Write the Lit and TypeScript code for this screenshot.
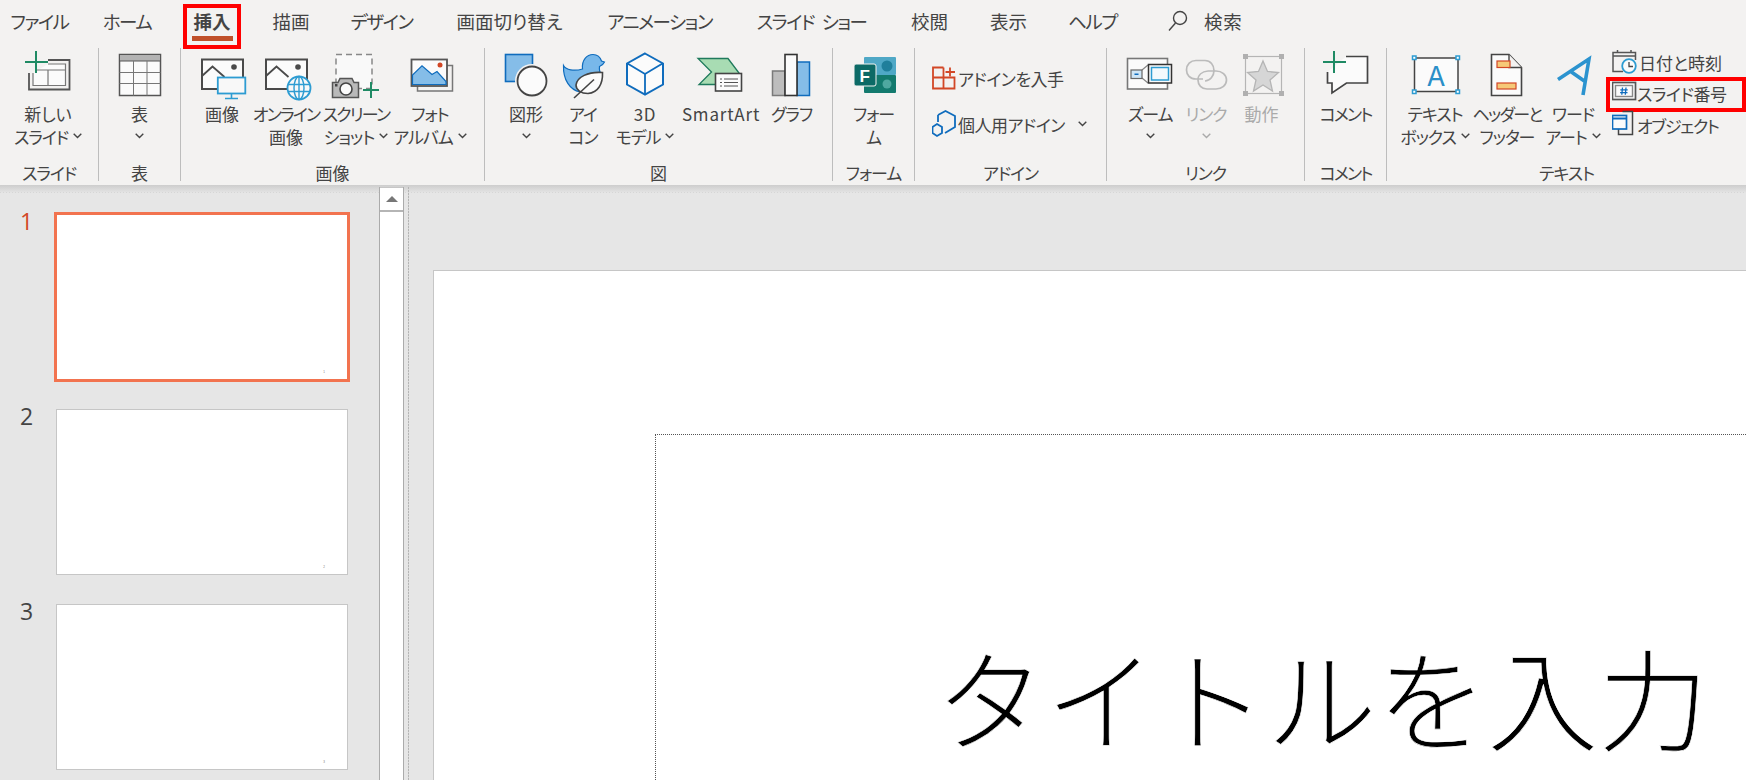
import { LitElement, html, css, svg } from "lit";
import { customElement } from "lit/decorators.js";

const BLUE = "#0f6cbd", SKY = "#2d9cd2", LIGHT = "#85bde8", DK = "#4a4a4a", GREEN = "#1f8a64", OR = "#d24726";
const plus = (x: number, y: number, a: number, b = a, w = 2) => svg`<path d="M${x - a} ${y}H${x + b}M${x} ${y - a}V${y + a}" stroke="${GREEN}" stroke-width="${w}" fill="none"/>`;
const picture = (dx: number) => svg`<g transform="translate(${dx} 0)"><rect x="202" y="59.5" width="41" height="29.5" fill="#fbfbfb" stroke="${DK}" stroke-width="2"/><path d="M202 76L212.5 66.500L224.500 77" fill="none" stroke="${DK}" stroke-width="1.800"/><circle cx="234" cy="67" r="2.800" fill="${DK}"/></g>`;

const ICONS: Record<string, unknown> = {
  slide: svg`<path d="M48 60H69.500V89.500H29V73" fill="none" stroke="#555" stroke-width="1.800"/><path d="M48 64H65.500V85.500H33V73" fill="#fbfbfb" stroke="#777" stroke-width="1.200"/><path d="M36 70H65.500M48 70V85.500" fill="none" stroke="#777" stroke-width="1.200"/>${plus(36, 62, 11, 12)}`,
  table: svg`<rect x="119.500" y="54.500" width="41" height="41" fill="#fbfbfb" stroke="#555" stroke-width="1.500"/><rect x="119.500" y="54.500" width="41" height="6.500" fill="#b3b3b3" stroke="#555" stroke-width="1"/><path d="M133.500 61V95.500M147 61V95.500M119.500 72.500H160.500M119.500 83.500H160.500" stroke="#777" stroke-width="1"/>`,
  image: svg`${picture(0)}<rect x="217.800" y="77.500" width="27.500" height="16" fill="#f8f8f8" stroke="${SKY}" stroke-width="1.800"/><path d="M231.500 94V98M225 98.500H238" stroke="${SKY}" stroke-width="1.600"/>`,
  online: svg`${picture(64)}<circle cx="299" cy="88" r="11.500" fill="#f8f8f8" stroke="${SKY}" stroke-width="1.800"/><ellipse cx="299" cy="88" rx="5" ry="11.500" fill="none" stroke="${SKY}" stroke-width="1.400"/><path d="M288 84.500H310M288 91.500H310M299 76.500V99.500" stroke="${SKY}" stroke-width="1.400"/>`,
  screen: svg`<rect x="336" y="54.500" width="36" height="34" fill="#f9f9f9" stroke="#888" stroke-width="1.500" stroke-dasharray="6 4"/><path d="M332.500 82.500H338L340 78.500H352L354 82.500H358.500V97.500H332.500Z" fill="#b9b9b9" stroke="#555" stroke-width="1.500"/><circle cx="346" cy="89" r="6" fill="#fbfbfb" stroke="#444" stroke-width="1.600"/><rect x="335" y="84" width="2.500" height="2.500" fill="#444"/>${plus(371, 90, 8)}`,
  album: svg`<path d="M417.500 86V91H452.500V65.500H447" fill="none" stroke="#777" stroke-width="1.500"/><rect x="411.500" y="59.500" width="35.500" height="26.500" fill="#fbfbfb" stroke="#555" stroke-width="1.800"/><path d="M412.500 84.500V75L422 65.800L432 74.500L437 71.500L446 81.500V84.500Z" fill="${LIGHT}" stroke="${BLUE}" stroke-width="1.200"/><circle cx="440" cy="65" r="2.500" fill="${OR}"/>`,
  shape: svg`<rect x="505.500" y="54.500" width="27" height="27" fill="${LIGHT}" stroke="${BLUE}" stroke-width="1.600"/><circle cx="532" cy="81" r="17" fill="#f3f2f1"/><circle cx="532" cy="81" r="14.500" fill="#fbfbfb" stroke="#444" stroke-width="1.800"/>`,
  icon: svg`<path d="M563.500 65.500C566 70 574 71.500 582.500 69C581.500 60 587 54.500 593 54.500C598 54.500 600.500 58 601.500 61L604.500 62C603 65 601 66 599.500 66.500C599 70 600 73 602 75L580 92C570 90 563 80 563.500 65.500Z" fill="#78b8ea" stroke="${BLUE}" stroke-width="1.200"/><path d="M602.500 72.500C603 84 598 92.500 588 93.500C581 93.500 576 90 576 85C577 77 588 71.500 602.500 72.500Z" fill="#fbfbfb" stroke="#444" stroke-width="1.600"/><path d="M574 98L594 79.500" stroke="#444" stroke-width="1.600" fill="none"/>`,
  cube: svg`<path d="M645 53.500L663 63.500V84.500L645 94.500L627 84.500V63.500Z" fill="#fbfbfb" stroke="${BLUE}" stroke-width="2"/><path d="M627.500 63.500L645 74L662.500 63.500M645 74V94" fill="none" stroke="${BLUE}" stroke-width="1.800"/>`,
  smart: svg`<path d="M698 58.500H728L739 73V84.500H699L711.500 72Z" fill="#a8dcb3" stroke="#1f7a5c" stroke-width="1.300"/><rect x="715.500" y="73.500" width="26" height="17.500" fill="#fbfbfb" stroke="#444" stroke-width="1.600"/><path d="M720 79H722M724 79H738M720 82.500H722M724 82.500H738M720 86H722M724 86H738" stroke="#555" stroke-width="1"/>`,
  chart: svg`<rect x="772.500" y="71" width="12.500" height="24.500" fill="#bdbdbd" stroke="#7a7a7a" stroke-width="1.500"/><rect x="797" y="62" width="12.500" height="33.500" fill="${LIGHT}" stroke="${BLUE}" stroke-width="1.500"/><rect x="785" y="54.500" width="12" height="41" fill="#fbfbfb" stroke="#333" stroke-width="1.600"/>`,
  form: svg`<rect x="863" y="57" width="32" height="18" rx="1" fill="#4fa8c6"/><rect x="863" y="75" width="32" height="18" rx="1" fill="#137a6e"/><circle cx="886" cy="66" r="5.500" fill="#1f7f9b"/><circle cx="886" cy="84" r="4.500" fill="#4fa8a0"/><rect x="853" y="64" width="22" height="22" rx="2" fill="#0c6a66" stroke="#f3f2f1"/><text x="858.500" y="81.500" font-family="Liberation Sans" font-weight="700" font-size="17" fill="#fff">F</text>`,
  addin: svg`<path d="M943.500 67.500H933V88.500H954.500V77.500H933M943.500 67.500V88.500" fill="none" stroke="${OR}" stroke-width="1.800"/><path d="M945.500 72H955M950 67.500V76.500" stroke="${OR}" stroke-width="1.800"/>`,
  hex: svg`<path d="M938 116L945.500 112L955 117V128L945 134M938 123V116" fill="none" stroke="${BLUE}" stroke-width="1.800"/><path d="M937 125L942 128V134L937 137L932.500 134V128Z" fill="none" stroke="${BLUE}" stroke-width="1.800"/>`,
  zoom: svg`<rect x="1127.500" y="58.500" width="40" height="30.500" fill="#fbfbfb" stroke="#777" stroke-width="1.600"/><path d="M1142 70L1148 65M1142 78L1148 83" stroke="#888" stroke-width="1.200"/><rect x="1131" y="70" width="11" height="8.500" fill="#cfe5f5" stroke="#666" stroke-width="1.200"/><rect x="1134.500" y="73.500" width="4" height="1.500" fill="${BLUE}"/><rect x="1148.500" y="64.500" width="23" height="18.500" fill="#fbfbfb" stroke="#333" stroke-width="1.500"/><rect x="1151.500" y="67.500" width="17" height="12.500" fill="#f4f9fc" stroke="${SKY}" stroke-width="1.500"/>`,
  link: svg`<path d="M1203 79H1196C1190 79 1186.500 75 1186.500 70C1186.500 64.500 1190.500 60.500 1196 60.500H1205C1210.500 60.500 1214 65 1214 70.500C1214 76 1210 81 1205 81" fill="none" stroke="#bbb" stroke-width="1.700"/><path d="M1208 71H1216C1222 71 1226.500 75 1226.500 80C1226.500 85 1222 89 1216 89H1207C1201.500 89 1198 85 1198 80C1198 75 1202 71.500 1208 71" fill="none" stroke="#bbb" stroke-width="1.700"/>`,
  action: svg`<rect x="1246.500" y="56.500" width="36" height="37" fill="none" stroke="#b5b5b5" stroke-width="1.200"/><g fill="#b0b0b0"><rect x="1244" y="54" width="5" height="5"/><rect x="1280" y="54" width="5" height="5"/><rect x="1244" y="91" width="5" height="5"/><rect x="1280" y="91" width="5" height="5"/></g><path d="M1264 61L1268.500 71.500L1279.500 72.500L1271 80L1273.500 91L1264 85L1254.500 91L1257 80L1248.500 72.500L1259.500 71.500Z" fill="#d6d6d6" stroke="#b5b5b5" stroke-width="1.300"/>`,
  comment: svg`<path d="M1345 56.500H1366.500V83H1345.500L1331 93V83H1326.500V72" fill="#fbfbfb" stroke="#444" stroke-width="1.700"/>${plus(1333, 62, 11, 12)}`,
  textbox: svg`<rect x="1414.500" y="58" width="43.500" height="33.500" fill="#fbfbfb" stroke="#444" stroke-width="1.500"/><g fill="#fff" stroke="${SKY}" stroke-width="1.500"><rect x="1412.500" y="56" width="3.500" height="3.500"/><rect x="1456" y="56" width="3.500" height="3.500"/><rect x="1412.500" y="90" width="3.500" height="3.500"/><rect x="1456" y="90" width="3.500" height="3.500"/></g><text x="1436" y="85.500" text-anchor="middle" font-family="Inter" font-weight="400" font-size="27" fill="#2a8fc8">A</text>`,
  header: svg`<path d="M1491.500 54.500H1509L1521.500 67.500V95.500H1491.500Z" fill="#fbfbfb" stroke="#444" stroke-width="1.600"/><path d="M1509 54.500V67.500H1521.500" fill="#f3f2f1" stroke="#444" stroke-width="1.400"/><rect x="1497" y="61" width="13" height="6.500" fill="#f6c978" stroke="${OR}" stroke-width="1.200"/><rect x="1497" y="83" width="19" height="6" fill="#f6c978" stroke="${OR}" stroke-width="1.200"/>`,
  wordart: svg`<path d="M1558 79.500L1589 59L1583 95M1570 71L1585 81.500" fill="none" stroke="#2b93cf" stroke-width="3.600" stroke-linejoin="miter"/>`,
  date: svg`<path d="M1623 73.500H1613V54.500H1635.500V62" fill="none" stroke="#555" stroke-width="1.500"/><path d="M1613 58H1635.500" stroke="#555" stroke-width="1.500"/><path d="M1617.500 52V55M1631 52V55" stroke="#555" stroke-width="1.500"/><circle cx="1629" cy="68" r="6.800" fill="#fbfbfb" stroke="${SKY}" stroke-width="1.800"/><path d="M1629 64V68.500H1633" fill="none" stroke="#444" stroke-width="1.300"/>`,
  number: svg`<rect x="1612.500" y="84.500" width="23" height="17" fill="#fbfbfb" stroke="#555" stroke-width="1.700"/><rect x="1615.500" y="87.500" width="17" height="11" fill="#fbfbfb" stroke="#888" stroke-width="1.400"/><path d="M1622.500 89.500L1621.800 96.800M1626 89.500L1625.300 96.800M1620.300 91.800H1627.700M1620.100 94.700H1627.500" stroke="${BLUE}" stroke-width="1.300"/>`,
  object: svg`<path d="M1622.500 113.500H1632.500V136.500H1618.500V131" fill="none" stroke="#444" stroke-width="1.500"/><rect x="1612.500" y="117.500" width="14" height="13.500" fill="#fbfbfb" stroke="${BLUE}" stroke-width="1.700"/><path d="M1612.500 120.500H1626.500" stroke="${BLUE}" stroke-width="2"/>`,
};

const chevSvg = html`<svg width="9" height="6" viewBox="0 0 9 6"><path d="M.7.8L4.500 4.600L8.300.8" fill="none" stroke="currentColor" stroke-width="1.400"/></svg>`;
const chev = html`<span class="chev">${chevSvg}</span>`;

const TIGHT = new Set(["オンライン", "スクリーン", "ヘッダーと", "コメント"]);
const kind = (t: string) => (/[A-Za-z0-9]/.test(t) ? "latin" : TIGHT.has(t) ? "kana tight" : /[\u30a0-\u30ff]/.test(t) ? "kana" : "kanji");

type Btn = { i: string; cx: number; w: number; t: string[]; c?: boolean; off?: boolean };
type Small = { i: string; t: string; c?: boolean };
type Group = { w: number; label: string; btns?: Btn[]; pre?: Small[]; post?: Small[] };

const GROUPS: Group[] = [
  { w: 99, label: "スライド", btns: [{ i: "slide", cx: 48, w: 96, t: ["新しい", "スライド"], c: true }] },
  { w: 82, label: "表", btns: [{ i: "table", cx: 140, w: 81, t: ["表", ""], c: true }] },
  { w: 304, label: "画像", btns: [
    { i: "image", cx: 222, w: 82, t: ["画像"] },
    { i: "online", cx: 286, w: 46, t: ["オンライン", "画像"] },
    { i: "screen", cx: 356, w: 94, t: ["スクリーン", "ショット"], c: true },
    { i: "album", cx: 430, w: 54, t: ["フォト", "アルバム"], c: true },
  ] },
  { w: 348, label: "図", btns: [
    { i: "shape", cx: 526, w: 82, t: ["図形", ""], c: true },
    { i: "icon", cx: 583, w: 32, t: ["アイ", "コン"] },
    { i: "cube", cx: 645, w: 92, t: ["3D", "モデル"], c: true },
    { i: "smart", cx: 721, w: 60, t: ["SmartArt"] },
    { i: "chart", cx: 792, w: 81, t: ["グラフ"] },
  ] },
  { w: 82, label: "フォーム", btns: [{ i: "form", cx: 873, w: 81, t: ["フォー", "ム"] }] },
  { w: 192, label: "アドイン", pre: [{ i: "addin", t: "アドインを入手" }, { i: "hex", t: "個人用アドイン", c: true }] },
  { w: 198, label: "リンク", btns: [
    { i: "zoom", cx: 1150, w: 86, t: ["ズーム", ""], c: true },
    { i: "link", cx: 1206, w: 26, t: ["リンク", ""], c: true, off: true },
    { i: "action", cx: 1263, w: 85, t: ["動作"], off: true },
  ] },
  { w: 82, label: "コメント", btns: [{ i: "comment", cx: 1345, w: 81, t: ["コメント"] }] },
  { w: 359, label: "テキスト", btns: [
    { i: "textbox", cx: 1435, w: 96, t: ["テキスト", "ボックス"], c: true },
    { i: "header", cx: 1507, w: 48, t: ["ヘッダーと", "フッター"] },
    { i: "wordart", cx: 1573, w: 84, t: ["ワード", "アート"], c: true },
  ], post: [{ i: "date", t: "日付と時刻" }, { i: "number", t: "スライド番号" }, { i: "object", t: "オブジェクト" }] },
];

const TABS: [string, number][] = [["ファイル", 79], ["ホーム", 96], ["挿入", 74], ["描画", 84], ["デザイン", 97], ["画面切り替え", 159], ["アニメーション", 141], ["スライド ショー", 163], ["校閲", 73], ["表示", 85], ["ヘルプ", 83]];

@customElement("app-root")
export class AppRoot extends LitElement {
  static styles = css`
    :host { display: block; width: 1746px; height: 780px; overflow: hidden; background: #e6e6e6; font-family: "Noto Sans CJK JP", "Noto Sans", sans-serif; color: #444; font-feature-settings: "palt"; }
    .tabs { display: flex; height: 44px; background: #f3f2f1; font-size: 18.500px; }
    .tab { display: flex; align-items: center; justify-content: center; white-space: nowrap; position: relative; padding-bottom: 2px; box-sizing: border-box; letter-spacing: .8px; word-spacing: 5px; }
    .tab.kana { letter-spacing: -1.500px; }
    .tab.on { font-weight: 700; }
    .tab.on::before { content: ""; position: absolute; left: 17px; width: 41px; top: 36px; height: 5px; background: #c0502a; }
    .tab.on::after { content: ""; position: absolute; left: 8px; top: 4px; width: 58px; height: 45px; box-sizing: border-box; border: 4px solid #f00; z-index: 3; }
    .search { display: flex; align-items: center; margin-left: 34px; gap: 16px; padding-bottom: 2px; letter-spacing: .8px; }
    .ribbon { display: flex; height: 141px; padding-top: 4px; box-sizing: border-box; background: #f3f2f1; font-size: 17px; }
    .group { flex: none; height: 133px; box-sizing: border-box; border-right: 1px solid #bdbdbd; display: flex; flex-direction: column; position: relative; }
    .group.last { border-right: 0; }
    .content { display: flex; height: 114px; flex: none; }
    .label { height: 22px; line-height: 22px; text-align: center; white-space: nowrap; margin-bottom: -3px; }
    .kana { letter-spacing: -1.100px; }
    .kana.tight { letter-spacing: -1.800px; }
    .kanji { letter-spacing: 0; }
    .latin { letter-spacing: .8px; }
    .btn { flex: none; display: flex; flex-direction: column; align-items: center; }
    .btn svg.big { display: block; flex: none; }
    .btn.off { color: #aaa; }
    .ln { display: flex; align-items: center; height: 23px; white-space: nowrap; line-height: 23px; }
    .big + .ln { margin-top: -2.500px; }
    .chev { margin-left: 5px; flex: none; display: flex; letter-spacing: 0; }
    .ln.only .chev { margin-left: 0; }
    .prelist { display: flex; flex-direction: column; padding: 8px 0 0 17px; gap: 2px; }
    .sm { display: flex; align-items: center; height: 44px; white-space: nowrap; letter-spacing: -.5px; }
    .sm svg.si { flex: none; margin-right: -1px; }
    .sm .chev { margin-left: 13px; }
    .postlist { display: flex; flex-direction: column; margin-top: -1.500px; margin-left: -3px; }
    .postlist .sm { height: 31.500px; position: relative; }
    .postlist .sm.date { letter-spacing: 0; }
    .postlist .sm.number svg.si, .postlist .sm.object svg.si { margin-right: -3px; }
    .postlist .sm.object { letter-spacing: -1.300px; }
    .postlist .sm.number::after { content: ""; position: absolute; left: -6px; top: -1.500px; width: 140px; height: 35px; box-sizing: border-box; border: 4px solid #f00; }
    .main { display: flex; height: 595px; overflow: hidden; background-color: #e6e6e6; background-image: repeating-linear-gradient(90deg, #d6d6d6 0 1px, transparent 1px 3px), linear-gradient(#cdcdcd, #e2e2e2 7px, #e6e6e6 8px); background-size: 100% 1px, 100% 100%; background-position: 0 7px, 0 0; background-repeat: no-repeat; }
    .panel { width: 379px; flex: none; box-sizing: border-box; padding-top: 27px; display: flex; flex-direction: column; gap: 25px; }
    .row { display: flex; flex: none; height: 170px; }
    .num { width: 54px; box-sizing: border-box; padding-left: 20px; margin-top: -3px; font-family: "Open Sans", sans-serif; font-size: 23px; line-height: 24px; color: #444; flex: none; }
    .row.on .num { color: #d24726; }
    .thumb { width: 292px; height: 166px; margin: 2px; box-sizing: border-box; background: #fff; border: 1px solid #c6c6c6; display: flex; justify-content: flex-end; align-items: flex-end; padding: 0 22px 5px 0; }
    .row.on .thumb { width: 296px; height: 170px; margin: 0; border: 3px solid #f2734f; }
    .mini { font-size: 3px; line-height: 4px; color: #777; font-family: "Liberation Sans", sans-serif; }
    .sb { width: 25px; flex: none; box-sizing: border-box; margin-top: 2px; background: #fff; border-left: 1px solid #ababab; border-right: 1px solid #ababab; }
    .sbtn { height: 25px; box-sizing: border-box; border-top: 1px solid #c6c6c6; border-bottom: 2px solid #b5b5b5; display: flex; align-items: center; justify-content: center; }
    .tri { width: 0; height: 0; border-left: 6px solid transparent; border-right: 6px solid transparent; border-bottom: 6px solid #777; }
    .split { width: 1px; flex: none; margin: 2px 0 0 4px; background: repeating-linear-gradient(#b5b5b5 0 2px, #d8d8d8 2px 3px); }
    .editor { flex: 1; min-width: 0; padding: 85px 0 0 24px; }
    .slide { height: 600px; background: #fff; border-top: 1px solid #c6c6c6; border-left: 1px solid #c6c6c6; padding: 163px 0 0 221px; }
    .ph { height: 400px; border-top: 1px dotted #555; border-left: 1px dotted #555; padding: 205px 0 0 279px; font-size: 110.500px; line-height: 1; color: #000; white-space: nowrap; font-weight: 200; font-feature-settings: normal; -webkit-text-stroke: .6px #fff; }
  `;

  private big(b: Btn) {
    return html`<svg class="big" width="64" height="56" viewBox="${b.cx - 32} 48 64 56">${ICONS[b.i]}</svg>`;
  }
  private si(s: Small, box: string, w: number, h: number) {
    return html`<svg class="si" width="${w}" height="${h}" viewBox="${box}">${ICONS[s.i]}</svg>`;
  }
  private button(b: Btn) {
    return html`<div class="btn ${b.off ? "off" : ""}" style="width:${b.w}px">
      ${this.big(b)}
      ${b.t.map((l, i) => html`<div class="ln ${l ? kind(l) : "only"}">${l}${b.c && i === b.t.length - 1 ? chev : ""}</div>`)}
    </div>`;
  }

  render() {
    const postBox: Record<string, string> = { date: "1612 49 28 30", number: "1612 81 28 30", object: "1612 112 28 30" };
    const preBox: Record<string, string> = { addin: "932 63 27 30", hex: "932 110 27 30" };
    return html`
      <div class="tabs">
        ${TABS.map(([t, w], i) => html`<div class="tab ${kind(t)} ${i === 2 ? "on" : ""}" style="width:${w}px">${t}</div>`)}
        <div class="search">
          <svg width="20" height="22" viewBox="0 0 20 22"><circle cx="12" cy="8" r="6.500" fill="none" stroke="#444" stroke-width="1.400"/><path d="M7.500 13L1 20.500" stroke="#444" stroke-width="1.400"/></svg>
          <span>検索</span>
        </div>
      </div>
      <div class="ribbon">
        ${GROUPS.map((g, gi) => html`
          <div class="group ${gi === GROUPS.length - 1 ? "last" : ""}" style="width:${g.w}px">
            <div class="content">
              ${g.btns?.map((b) => this.button(b))}
              ${g.pre ? html`<div class="prelist">${g.pre.map((s) => html`<div class="sm">${this.si(s, preBox[s.i], 27, 30)}<span>${s.t}</span>${s.c ? chev : ""}</div>`)}</div>` : ""}
              ${g.post ? html`<div class="postlist">${g.post.map((s) => html`<div class="sm ${s.i}">${this.si(s, postBox[s.i], 28, 30)}<span>${s.t}</span></div>`)}</div>` : ""}
            </div>
            <div class="label ${kind(g.label)}">${g.label}</div>
          </div>`)}
      </div>
      <div class="main">
        <div class="panel">
          ${[1, 2, 3].map((n) => html`<div class="row ${n === 1 ? "on" : ""}"><div class="num">${n}</div><div class="thumb"><span class="mini">${n}</span></div></div>`)}
        </div>
        <div class="sb"><div class="sbtn"><div class="tri"></div></div></div>
        <div class="split"></div>
        <div class="editor"><div class="slide"><div class="ph">タイトルを入力</div></div></div>
      </div>
    `;
  }
}
